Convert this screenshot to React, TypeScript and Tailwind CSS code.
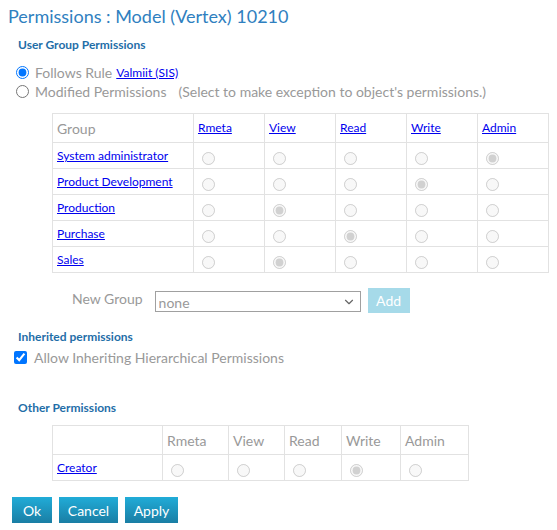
import { ChevronDown } from 'lucide-react'

const groups = [
  { name: 'System administrator', level: 4 },
  { name: 'Product Development', level: 3 },
  { name: 'Production', level: 1 },
  { name: 'Purchase', level: 2 },
  { name: 'Sales', level: 1 },
]

const levels = ['Rmeta', 'View', 'Read', 'Write', 'Admin']
const otherWidths = ['w-[66px]', 'w-[56px]', 'w-[57px]', 'w-[59px]', 'w-[68px]']

function Radio({ checked, name }: { checked: boolean; name: string }) {
  return <input type="radio" name={name} checked={checked} disabled readOnly className="m-0 ml-[4px] mt-[2px] align-middle" />
}

export default function App() {
  return (
    <div className="min-h-screen bg-white font-['Lato','Segoe_UI',sans-serif] text-[14px] text-[#999] px-2 pt-[4px]">
      <h1 className="text-[18px] leading-6 text-[#2f80c0]">Permissions : Model (Vertex) 10210</h1>

      {/* User group permissions */}
      <div className="pl-[10px] mt-[9px]">
        <h2 className="text-[12px] font-bold text-[#1f6ea8] leading-4">User Group Permissions</h2>
        <div className="mt-[10px] flex flex-col">
          <label className="flex items-center h-[19px] -ml-[2px]">
            <input type="radio" name="mode" defaultChecked className="m-0 mr-[6px] ml-0" />
            <span>Follows Rule</span>
            <a href="#" className="ml-1 text-[12px] text-[#0000ee] underline">Valmiit (SIS)</a>
          </label>
          <label className="flex items-center h-[19px] -ml-[2px]">
            <input type="radio" name="mode" className="m-0 mr-[6px] ml-0" />
            <span>Modified Permissions</span>
            <span className="ml-3">(Select to make exception to object's permissions.)</span>
          </label>
        </div>

        <table className="mt-[12px] ml-[34px] w-[495px] table-fixed border-collapse border border-[#e2e2e2]">
          <thead>
            <tr className="h-[29px]">
              <th className="w-[141px] border border-[#e2e2e2] px-1 text-left font-normal">Group</th>
              {levels.map(l => (
                <th key={l} className="w-[71px] border border-[#e2e2e2] px-1 text-left font-normal text-[12px]">
                  <a href="#" className="text-[#0000ee] underline">{l}</a>
                </th>
              ))}
            </tr>
          </thead>
          <tbody>
            {groups.map((g, gi) => (
              <tr key={g.name} className="h-[26px]">
                <td className="border border-[#e2e2e2] px-1 text-[12px] whitespace-nowrap">
                  <a href="#" className="text-[#0000ee] underline">{g.name}</a>
                </td>
                {levels.map((l, li) => (
                  <td key={l} className="border border-[#e2e2e2] px-1">
                    <Radio name={'g' + gi} checked={li === g.level} />
                  </td>
                ))}
              </tr>
            ))}
          </tbody>
        </table>

        <div className="flex items-center mt-[16px] ml-[54px] h-[25px]">
          <span className="mr-3 -mt-[7px]">New Group</span>
          <div className="relative w-[206px] h-[21px] border border-[#a0a0a0]">
            <select className="appearance-none w-full h-full pl-[3px] text-[#999] outline-none">
              <option>none</option>
            </select>
            <ChevronDown size={14} strokeWidth={2} className="absolute right-[4px] top-[3px] text-[#666] pointer-events-none" />
          </div>
          <button disabled className="ml-[7px] h-[25px] w-[42px] bg-[#a6dae9] text-white text-[14px] -mt-[2px]">Add</button>
        </div>

        <h2 className="text-[12px] font-bold text-[#1f6ea8] leading-4 mt-[15px]">Inherited permissions</h2>
        <label className="flex items-center h-[19px] mt-[3px] -ml-[4px]">
          <input type="checkbox" defaultChecked className="m-0 mr-[7px]" />
          <span>Allow Inheriting Hierarchical Permissions</span>
        </label>

        <h2 className="text-[12px] font-bold text-[#1f6ea8] leading-4 mt-[33px]">Other Permissions</h2>
        <table className="mt-[9px] ml-[34px] border-collapse border border-[#e2e2e2]">
          <thead>
            <tr className="h-[29px]">
              <th className="w-[110px] border border-[#e2e2e2] px-1 font-normal"></th>
              {levels.map((l, li) => (
                <th key={l} className={`${otherWidths[li]} border border-[#e2e2e2] px-1 text-left font-normal`}>{l}</th>
              ))}
            </tr>
          </thead>
          <tbody>
            <tr className="h-[26px]">
              <td className="border border-[#e2e2e2] px-1 text-[12px]">
                <a href="#" className="text-[#0000ee] underline">Creator</a>
              </td>
              {levels.map((l, li) => (
                <td key={l} className="border border-[#e2e2e2] px-1">
                  <Radio name="creator" checked={li === 3} />
                </td>
              ))}
            </tr>
          </tbody>
        </table>
      </div>

      {/* Dialog buttons */}
      <div className="flex gap-[7px] mt-4 ml-1">
        {[['Ok', 'w-[40px]'], ['Cancel', 'w-[59px]'], ['Apply', 'w-[53px]']].map(([b, w]) => (
          <button key={b} className={`${w} h-[26px] text-white text-[14px] bg-gradient-to-b from-[#21acd8] to-[#1a7ea4]`}>{b}</button>
        ))}
      </div>
    </div>
  )
}
